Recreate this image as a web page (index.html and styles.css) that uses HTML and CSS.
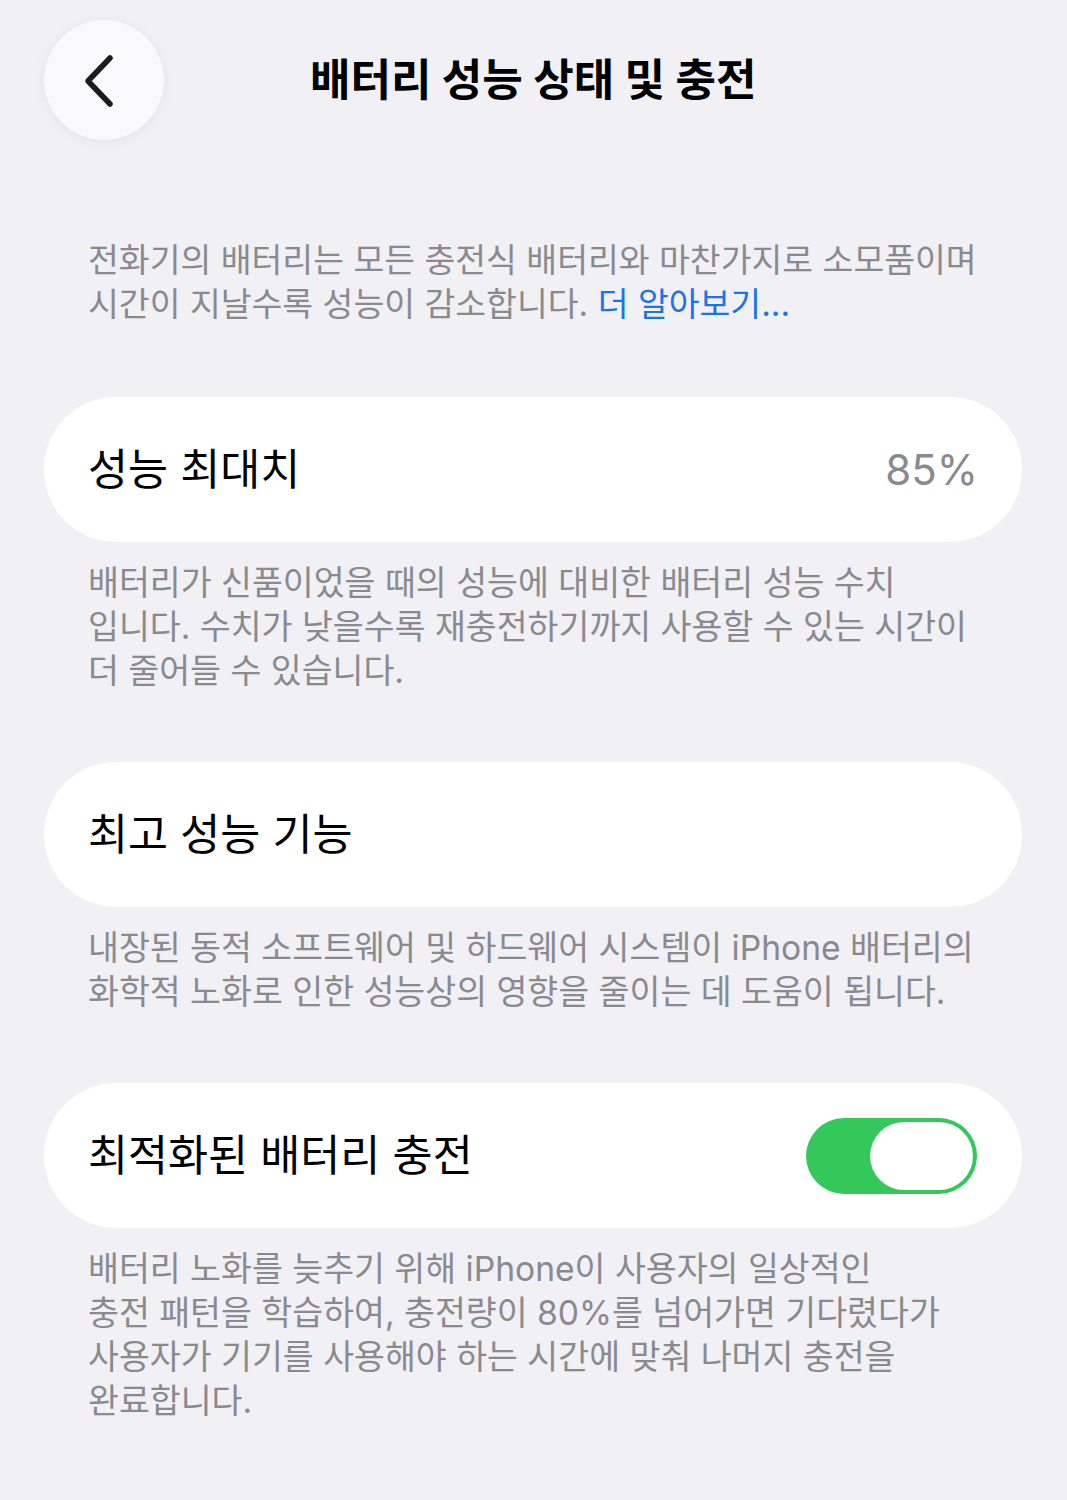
FILE: index.html
```html
<!DOCTYPE html>
<html lang="ko">
<head>
<meta charset="utf-8">
<title>배터리 성능 상태 및 충전</title>
<link rel="stylesheet" href="styles.css">
</head>
<body>
<div class="page">
  <header class="nav">
    <button class="back" aria-label="뒤로">
      <svg width="40" height="60" viewBox="0 0 40 60"><path d="M30 8 L8 31 L30 54" fill="none" stroke="#1c1c1e" stroke-width="5.5" stroke-linecap="round" stroke-linejoin="round"/></svg>
    </button>
    <h1 class="title">배터리 성능 상태 및 충전</h1>
  </header>

  <p class="intro">전화기의 배터리는 모든 충전식 배터리와 마찬가지로 소모품이며<br>시간이 지날수록 성능이 감소합니다. <span class="link">더 알아보기...</span></p>

  <section class="group first">
    <div class="card">
      <span class="label">성능 최대치</span>
      <span class="value">85%</span>
    </div>
    <p class="note">배터리가 신품이었을 때의 성능에 대비한 배터리 성능 수치<br>입니다. 수치가 낮을수록 재충전하기까지 사용할 수 있는 시간이<br>더 줄어들 수 있습니다.</p>
  </section>

  <section class="group">
    <div class="card">
      <span class="label">최고 성능 기능</span>
    </div>
    <p class="note">내장된 동적 소프트웨어 및 하드웨어 시스템이 iPhone 배터리의<br>화학적 노화로 인한 성능상의 영향을 줄이는 데 도움이 됩니다.</p>
  </section>

  <section class="group">
    <div class="card">
      <span class="label">최적화된 배터리 충전</span>
      <span class="toggle"><span class="knob"></span></span>
    </div>
    <p class="note">배터리 노화를 늦추기 위해 iPhone이 사용자의 일상적인<br>충전 패턴을 학습하여, 충전량이 80%를 넘어가면 기다렸다가<br>사용자가 기기를 사용해야 하는 시간에 맞춰 나머지 충전을<br>완료합니다.</p>
  </section>
</div>
</body>
</html>
```

FILE: styles.css
```css
html, body {
  margin: 0;
  padding: 0;
  background: #f0f0f5;
}
body {
  font-family: "Inter", "Noto Sans CJK KR", sans-serif;
  color: #000;
  width: 1067px;
  min-height: 1500px;
}
.page {
  padding: 20px 45px 0 44px;
}
.nav {
  display: flex;
  align-items: center;
  height: 120px;
}
.back {
  width: 120px;
  height: 120px;
  border-radius: 50%;
  border: none;
  background: #f9f9fb;
  box-shadow: 0 2px 14px rgba(0, 0, 0, 0.06);
  display: flex;
  align-items: center;
  justify-content: center;
  padding: 0;
  margin: 0;
  flex-shrink: 0;
}
.back svg {
  margin-left: -8px;
}
.title {
  margin: 0 0 0 146px;
  font-size: 44px;
  font-weight: 700;
  line-height: 1;
  color: #000;
}
.intro {
  margin: 98px 0 0 0;
  padding-left: 44px;
  font-size: 33.5px;
  line-height: 44px;
  color: #8a8a8e;
  white-space: nowrap;
}
.link {
  color: #1a73e8;
}
.group {
  margin-top: 71px;
}
.group + .group {
  margin-top: 69px;
}
.card {
  background: #fff;
  border-radius: 72px;
  height: 145px;
  display: flex;
  align-items: center;
  justify-content: space-between;
  padding: 0 44px;
  box-sizing: border-box;
}
.label {
  font-size: 43.5px;
  line-height: 1;
  color: #000;
}
.value {
  font-size: 42px;
  color: #8a8a8e;
  line-height: 1;
}
.note {
  margin: 19px 0 0 0;
  padding-left: 44px;
  font-size: 33.6px;
  line-height: 44px;
  color: #8a8a8e;
  white-space: nowrap;
}
.toggle {
  width: 171px;
  height: 76px;
  border-radius: 38px;
  background: #34c759;
  display: flex;
  align-items: center;
  justify-content: flex-end;
  padding-right: 4px;
  box-sizing: border-box;
  margin-right: 1px;
}
.knob {
  width: 103px;
  height: 68px;
  border-radius: 34px;
  background: #fff;
}
```
